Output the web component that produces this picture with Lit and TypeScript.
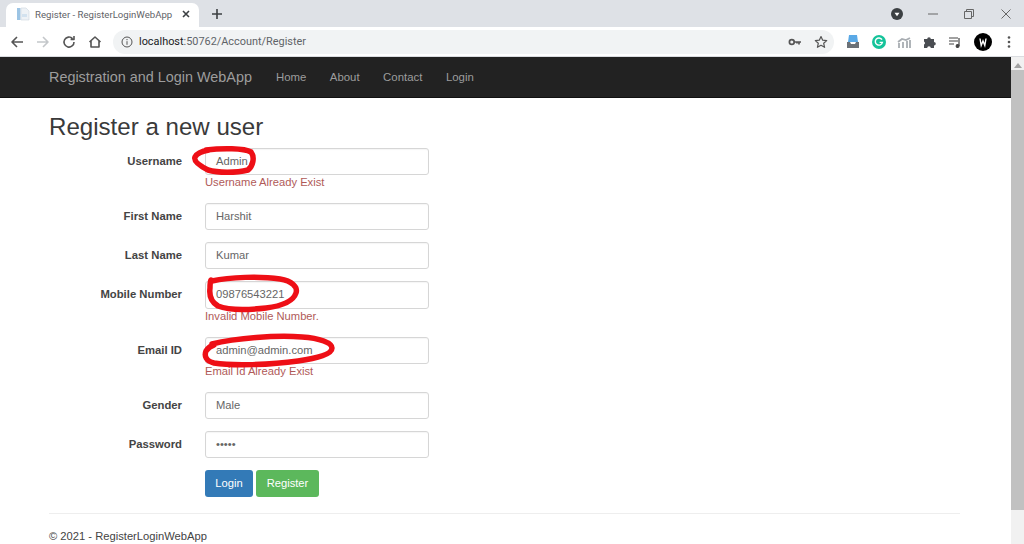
import { LitElement, html, css, svg } from "lit";
import { customElement } from "lit/decorators.js";

type Field = { label: string; value: string; error?: string };

const fields: Field[] = [
  { label: "Username", value: "Admin", error: "Username Already Exist" },
  { label: "First Name", value: "Harshit" },
  { label: "Last Name", value: "Kumar" },
  { label: "Mobile Number", value: "09876543221", error: "Invalid Mobile Number." },
  { label: "Email ID", value: "admin@admin.com", error: "Email Id Already Exist" },
  { label: "Gender", value: "Male" },
  { label: "Password", value: "•••••" },
];

@customElement("app-root")
export class AppRoot extends LitElement {
  static styles = css`
    :host {
      display: flex;
      flex-direction: column;
      width: 1024px;
      height: 544px;
      overflow: hidden;
      background: #fff;
      font-family: "Liberation Sans", Arial, sans-serif;
      position: relative;
    }
    svg { display: block; flex: none; }
    .tabstrip {
      height: 27px;
      flex: none;
      background: #dee1e6;
      display: flex;
      align-items: flex-end;
      padding-left: 6px;
    }
    .tab {
      width: 193px;
      height: 24px;
      background: #fff;
      border-radius: 7px 7px 0 0;
      display: flex;
      align-items: center;
      padding: 0 0 2px 10px;
      box-sizing: border-box;
      font: 9.6px Roboto, sans-serif;
      color: #5f6368;
    }
    .tab-title { margin-left: 5px; width: 146px; white-space: nowrap; }
    .newtab { margin-left: 12px; margin-bottom: 7px; }
    .tabstrip-right {
      margin-left: auto;
      height: 27px;
      display: flex;
      align-items: center;
    }
    .profile-dot { margin-right: 11.5px; }
    .winbtn { width: 36.5px; display: flex; justify-content: center; }
    .toolbar {
      height: 30px;
      flex: none;
      background: #fff;
      display: flex;
      align-items: center;
      box-sizing: border-box;
      padding-left: 9px;
      border-bottom: 1px solid #dadce0;
    }
    .nav-icons { display: flex; gap: 10px; align-items: center; }
    .omnibox {
      margin-left: 10px;
      width: 721px;
      height: 24px;
      background: #f1f3f4;
      border-radius: 12px;
      display: flex;
      align-items: center;
      padding: 0 6px 0 8px;
      box-sizing: border-box;
      font: 10.9px Roboto, sans-serif;
      color: #5f6368;
    }
    .url { margin-left: 6px; }
    .url b { font-weight: 400; color: #202124; }
    .omni-right { margin-left: auto; display: flex; gap: 12px; align-items: center; }
    .extensions {
      margin-left: 12px;
      display: flex;
      align-items: center;
      gap: 11.5px;
    }
    .dots { margin-left: 1px; }
    .viewport { flex: 1; min-height: 0; display: flex; }
    .page { flex: 1; min-width: 0; overflow: hidden; position: relative; }
    .scrollbar {
      width: 13px;
      flex: none;
      background: #f1f1f1;
      display: flex;
      flex-direction: column;
      align-items: center;
    }
    .thumb { width: 13px; height: 440px; background: #c1c1c1; margin-top: 2px; }
    .arrow { margin-top: 6px; }
    .navbar {
      height: 41px;
      background: #222;
      display: flex;
      align-items: center;
      padding-left: 49px;
      color: #9d9d9d;
      font-size: 11.4px;
      border-bottom: 1px solid #111;
      box-sizing: border-box;
    }
    .brand { font-size: 14.4px; margin-right: 24px; }
    .navbar a { margin-right: 23.5px; }
    .content { padding: 0 49px; position: relative; }
    h2 {
      margin: 15px 0 7px;
      font-size: 24.1px;
      line-height: 28px;
      font-weight: 400;
      color: #3a3a3a;
    }
    .row {
      display: flex;
      align-items: flex-start;
      margin-bottom: 12.1px;
      font-size: 11.2px;
    }
    .row label {
      width: 133px;
      text-align: right;
      font-weight: 700;
      font-size: 11.3px;
      color: #444;
      line-height: 27px;
      flex: none;
      margin-right: 23px;
    }
    .input {
      width: 224px;
      height: 27.1px;
      box-sizing: border-box;
      background: #fff;
      border: 1px solid #d6d6d6;
      border-radius: 3px;
      padding: 0 10px;
      line-height: 25px;
      color: #666;
      box-shadow: inset 0 1px 1px rgba(0, 0, 0, 0.04);
    }
    .error { color: #b05a58; line-height: 15.9px; }
    .actions { display: flex; gap: 3px; margin-left: 156px; margin-top: -0.4px; }
    .btn {
      height: 27px;
      box-sizing: border-box;
      border-radius: 3px;
      color: #fff;
      font-size: 11.2px;
      line-height: 27px;
      text-align: center;
    }
    .primary { background: #337ab7; width: 48px; }
    .success { background: #5cb85c; width: 63px; }
    hr {
      border: 0;
      border-top: 1px solid #eee;
      margin: 16.6px 0 14px;
      width: 911px;
    }
    footer { font-size: 11.2px; color: #444; line-height: 16px; }
    .marks { position: absolute; left: 0; top: 0; pointer-events: none; }
  `;

  private icon(d: string, color = "#5f6368", sw = 1.6) {
    return html`<svg width="16" height="16" viewBox="0 0 16 16" fill="none" stroke=${color} stroke-width=${sw}>${svg`<path d=${d} stroke-linejoin="round"/>`}</svg>`;
  }

  render() {
    return html`
      <div class="tabstrip">
        <div class="tab">
          <svg width="14" height="14" viewBox="0 0 14 14">
            <rect x="1" y="1" width="3.5" height="12" fill="#9cc4e4"/>
            <path d="M5 1h5l3 3v9H5z" fill="#eef2f6" stroke="#d3dbe2" stroke-width=".7"/>
            <rect x="6" y="7" width="5" height="3" fill="#d3e2ef"/>
          </svg>
          <span class="tab-title">Register - RegisterLoginWebApp</span>
          <svg width="10" height="10" viewBox="0 0 10 10" stroke="#3c4043" stroke-width="1.6"><path d="M2 2l6 6M8 2l-6 6"/></svg>
        </div>
        <svg class="newtab" width="12" height="12" viewBox="0 0 12 12" stroke="#3c4043" stroke-width="1.6"><path d="M6 1v10M1 6h10"/></svg>
        <div class="tabstrip-right">
          <svg class="profile-dot" width="12" height="12" viewBox="0 0 12 12"><circle cx="6" cy="6" r="6" fill="#3c4043"/><path d="M3.5 4.8h5L6 8.2z" fill="#fff"/></svg>
          <div class="winbtn"><svg width="10" height="10" viewBox="0 0 10 10" stroke="#666" fill="none"><path d="M0 5h10"/></svg></div>
          <div class="winbtn"><svg width="10" height="10" viewBox="0 0 10 10" stroke="#666" fill="none"><path d="M.5 2.5h7v7h-7zM2.5 2.5v-2h7v7h-2"/></svg></div>
          <div class="winbtn"><svg width="10" height="10" viewBox="0 0 10 10" stroke="#666" fill="none"><path d="M.5.5l9 9M9.5.5l-9 9"/></svg></div>
        </div>
      </div>
      <div class="toolbar">
        <div class="nav-icons">
          ${this.icon("M14 8H3M8 3L3 8l5 5", "#555")}
          ${this.icon("M2 8h11M8 3l5 5-5 5", "#c4c7ca")}
          ${this.icon("M13 8a5 5 0 1 1-1.5-3.5M13 2v3.4H9.6", "#555")}
          ${this.icon("M2.5 8L8 3l5.5 5M4 7v6h8V7", "#555")}
        </div>
        <div class="omnibox">
          <svg width="12" height="12" viewBox="0 0 12 12" fill="none" stroke="#555"><circle cx="6" cy="6" r="5"/><path d="M6 5.2v3.6M6 3v1.2"/></svg>
          <span class="url"><b>localhost</b>:50762/Account/Register</span>
          <div class="omni-right">
            <svg width="14" height="14" viewBox="0 0 14 14" fill="none" stroke="#555" stroke-width="1.7"><circle cx="3.8" cy="7" r="2.4"/><path d="M6.5 7H13M11 7v2.5M9 7v1.5"/></svg>
            <svg width="14" height="14" viewBox="0 0 14 14" fill="none" stroke="#555" stroke-width="1.2"><path d="M7 1.5l1.7 3.7 4 .4-3 2.7.9 4L7 10.3l-3.6 2 .9-4-3-2.7 4-.4z" stroke-linejoin="round"/></svg>
          </div>
        </div>
        <div class="extensions">
          <svg width="14" height="16" viewBox="0 0 14 16"><path d="M3 1h8l1 7H2z" fill="#5aa9e6"/><path d="M1 8h3l1 2h4l1-2h3v6H1z" fill="#6b7177"/></svg>
          <svg width="14" height="14" viewBox="0 0 14 14"><circle cx="7" cy="7" r="7" fill="#15c39a"/><path d="M10 4.7A3.6 3.6 0 1 0 10.4 7.4H7.6" fill="none" stroke="#fff" stroke-width="1.4"/></svg>
          <svg width="14" height="14" viewBox="0 0 14 14" fill="none" stroke="#a8adb2" stroke-width="1.8"><path d="M2 13V8M6 13V7M10 13V6M13 13V5M1 7l4-3 4 1 4-2"/></svg>
          <svg width="14" height="14" viewBox="0 0 14 14"><path d="M1 4h3.2a1.8 1.8 0 0 1 3.6 0H11v3a1.8 1.8 0 0 1 0 3.6V13H7.8a1.8 1.8 0 0 0-3.6 0H1V9.6a1.8 1.8 0 0 0 0-3.2z" fill="#4a4d52"/></svg>
          <svg width="14" height="14" viewBox="0 0 14 14" fill="none" stroke="#444" stroke-width="1.2"><path d="M1 3h9M1 6h9M1 9h5M11 3v8"/><circle cx="9.6" cy="11" r="1.4" fill="#444"/></svg>
          <svg width="18" height="18" viewBox="0 0 18 18"><circle cx="9" cy="9" r="9" fill="#000"/><path d="M6 5.5l1.2 7 1.8-4.5 1.8 4.5 1.2-7" fill="none" stroke="#fff" stroke-width="1.4"/></svg>
          <svg class="dots" width="10" height="14" viewBox="0 0 10 14" fill="#555"><circle cx="5" cy="2.5" r="1.3"/><circle cx="5" cy="7" r="1.3"/><circle cx="5" cy="11.5" r="1.3"/></svg>
        </div>
      </div>
      <div class="viewport">
        <div class="page">
          <div class="navbar">
            <span class="brand">Registration and Login WebApp</span>
            <a>Home</a><a>About</a><a>Contact</a><a>Login</a>
          </div>
          <div class="content">
            <h2>Register a new user</h2>
            ${fields.map(
              (f) => html`
                <div class="row">
                  <label>${f.label}</label>
                  <div>
                    <div class="input">${f.value}</div>
                    ${f.error ? html`<div class="error">${f.error}</div>` : ""}
                  </div>
                </div>
              `
            )}
            <div class="actions">
              <div class="btn primary">Login</div>
              <div class="btn success">Register</div>
            </div>
            <hr />
            <footer>© 2021 - RegisterLoginWebApp</footer>
          </div>
          <svg class="marks" width="1011" height="487" viewBox="0 57 1011 487" fill="none" stroke="#ee0f16" stroke-width="5.5" stroke-linecap="round" stroke-linejoin="round">
            <path d="M206 150c16-2 38-2 45 2 4 5 2 14-3 18-12 3-30 3-40 0-6-3-15-8-13-13 2-4 8-6 14-7"/>
            <path d="M212 281c18-4 48-5 68-2 12 2 18 8 16 14-3 9-14 13-30 15-18 2-38 2-48-2-7-4-9-10-8-18 0-3 0-6 1-8"/>
            <path d="M212 344c24-6 64-9 90-7 18 1 30 6 30 11 0 6-14 10-34 13-28 4-66 5-84 2-8-2-10-7-8-12 2-3 4-5 8-6"/>
          </svg>
        </div>
        <div class="scrollbar">
          <svg class="arrow" width="8" height="5" viewBox="0 0 8 5"><path d="M4 0l4 5H0z" fill="#a3a3a3"/></svg>
          <div class="thumb"></div>
        </div>
      </div>
    `;
  }
}
